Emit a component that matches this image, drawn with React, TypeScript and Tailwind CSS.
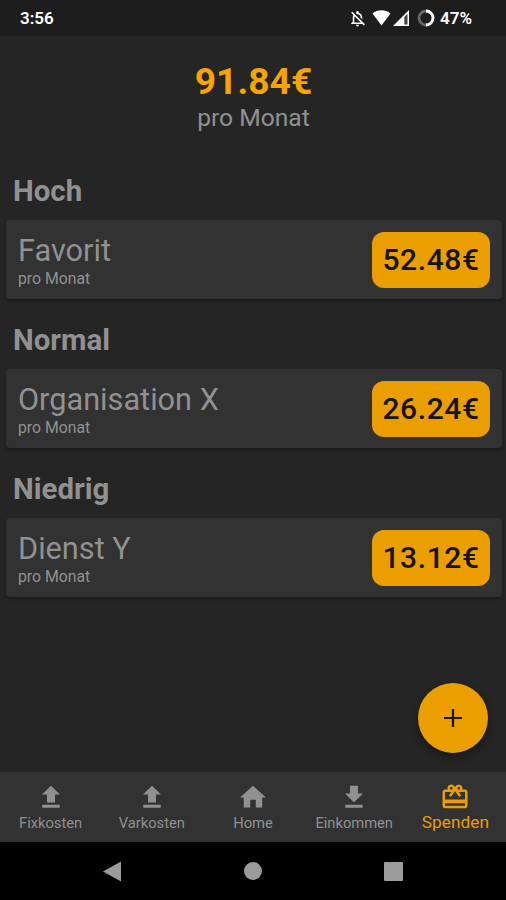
import type { ReactNode } from 'react';
import { MdRedeem, MdOutlineNotificationsOff } from 'react-icons/md';

interface Donation {
    group: string;
    name: string;
    amount: string;
}

const donations: Donation[] = [
    { group: 'Hoch', name: 'Favorit', amount: '52.48€' },
    { group: 'Normal', name: 'Organisation X', amount: '26.24€' },
    { group: 'Niedrig', name: 'Dienst Y', amount: '13.12€' },
];

function Glyph({ d }: { d: string }) {
    return (
        <svg viewBox="0 0 24 24" className="h-[30px] w-[30px]" fill="currentColor">
            <path d={d} />
        </svg>
    );
}

const UPLOAD = 'M5 20.5h14v-2.4H5v2.4zM8.8 16.4h6.4V10h4l-7.2-7-7.2 7h4v6.4z';
const DOWNLOAD = 'M19.2 9.2h-4V3H8.8v6.2h-4l7.2 7.2 7.2-7.2zM5 18.1v2.4h14v-2.4H5z';
const HOME = 'M9.8 20.4v-6.2h4.4v6.2h5.2v-8h3L12 3 1.6 12.4h3v8z';

function StatusBar() {
    return (
        <header className="flex h-9 shrink-0 items-center justify-between bg-[#1d1d1d] pl-5 pr-[34px] text-white">
            <span className="text-[17px] font-semibold leading-9">3:56</span>
            <div className="flex items-center">
                <MdOutlineNotificationsOff className="h-[19px] w-[19px]" />
                <svg viewBox="0 0 18 16" className="ml-[5px] h-4 w-[19px]" fill="currentColor">
                    <path d="M0 3.5C5-.9 13-.9 18 3.5L9 15.5z" />
                </svg>
                <svg viewBox="0 0 16 16" className="ml-0.5 h-4 w-4">
                    <path d="M0 16L16 0v16z" fill="white" />
                    <path d="M11.3 7L14.5 3.7v10.8h-3.2z" fill="#444" />
                </svg>
                <svg viewBox="0 0 18 18" className="ml-2 h-[18px] w-[18px]" fill="none" strokeWidth="2.8">
                    <circle cx="9" cy="9" r="7" stroke="#666" />
                    <path d="M9 2a7 7 0 0 1 0 14" stroke="white" />
                </svg>
                <span className="ml-[5px] text-[17px] font-semibold leading-9">47%</span>
            </div>
        </header>
    );
}

function DonationCard({ donation }: { donation: Donation }) {
    return (
        <section className="h-[149px] pl-[6px] pr-[4px]">
            <h2 className="h-[50px] pl-[7px] text-[29.4px] font-bold leading-[43px]">{donation.group}</h2>
            <div className="flex h-[79px] items-center justify-between rounded-[4px] bg-[#323232] px-3 shadow-[0_2px_3px_rgba(0,0,0,0.3)]">
                <div className="pt-0.5">
                    <p className="text-[30.7px] leading-[35px]">{donation.name}</p>
                    <p className="text-[15.8px] leading-[21px]">pro Monat</p>
                </div>
                <div className="flex h-14 w-[118px] items-center justify-center rounded-xl bg-[#eb9e00] text-[30px] font-medium tracking-[0.6px] text-[#141414]">
                    {donation.amount}
                </div>
            </div>
        </section>
    );
}

function NavItem({ icon, label, active = false }: { icon: ReactNode; label: string; active?: boolean }) {
    return (
        <div className={active ? 'flex flex-1 flex-col items-center text-[#eb9e00]' : 'flex flex-1 flex-col items-center text-[#919191]'}>
            {icon}
            <span className={active ? 'text-[17.3px] leading-5' : 'text-[14.7px] leading-[23px]'}>{label}</span>
        </div>
    );
}

export default function App() {
    return (
        <div className="flex h-[900px] w-[506px] flex-col overflow-hidden bg-[#252525] font-['Roboto',sans-serif] text-[#919191]">
            <StatusBar />

            <main className="relative flex-1">
                <div className="h-[134px] pt-[23px] pl-px text-center">
                    <p className="text-[37.2px] font-bold leading-[44px] text-[#f5a400]">91.84€</p>
                    <p className="text-[24.6px] leading-[30px]">pro Monat</p>
                </div>
                {donations.map((donation) => (
                    <DonationCard key={donation.group} donation={donation} />
                ))}

                {/* Add button */}
                <button className="absolute bottom-[19px] right-[18px] flex h-[70px] w-[70px] items-center justify-center rounded-full bg-[#eb9e00] shadow-[0_4px_8px_rgba(0,0,0,0.4)]">
                    <svg viewBox="0 0 18 18" className="h-[18px] w-[18px]" stroke="#141414" strokeWidth="2.2">
                        <path d="M9 0v18M0 9h18" />
                    </svg>
                </button>
            </main>

            <nav className="flex h-[70px] shrink-0 bg-[#323232] pt-2.5">
                <NavItem icon={<Glyph d={UPLOAD} />} label="Fixkosten" />
                <NavItem icon={<Glyph d={UPLOAD} />} label="Varkosten" />
                <NavItem icon={<Glyph d={HOME} />} label="Home" />
                <NavItem icon={<Glyph d={DOWNLOAD} />} label="Einkommen" />
                <NavItem icon={<MdRedeem className="h-[30px] w-[30px]" />} label="Spenden" active />
            </nav>

            {/* Android system buttons */}
            <footer className="flex h-[58px] shrink-0 items-center justify-between bg-black px-[103px]">
                <svg viewBox="0 0 19 21" className="h-[21px] w-[19px]" fill="#9b9b9b">
                    <path d="M0 10.5L18 .5v20z" />
                </svg>
                <div className="h-[18px] w-[18px] rounded-full bg-[#9b9b9b]" />
                <div className="h-[19px] w-[19px] rounded-[1px] bg-[#9b9b9b]" />
            </footer>
        </div>
    );
}
